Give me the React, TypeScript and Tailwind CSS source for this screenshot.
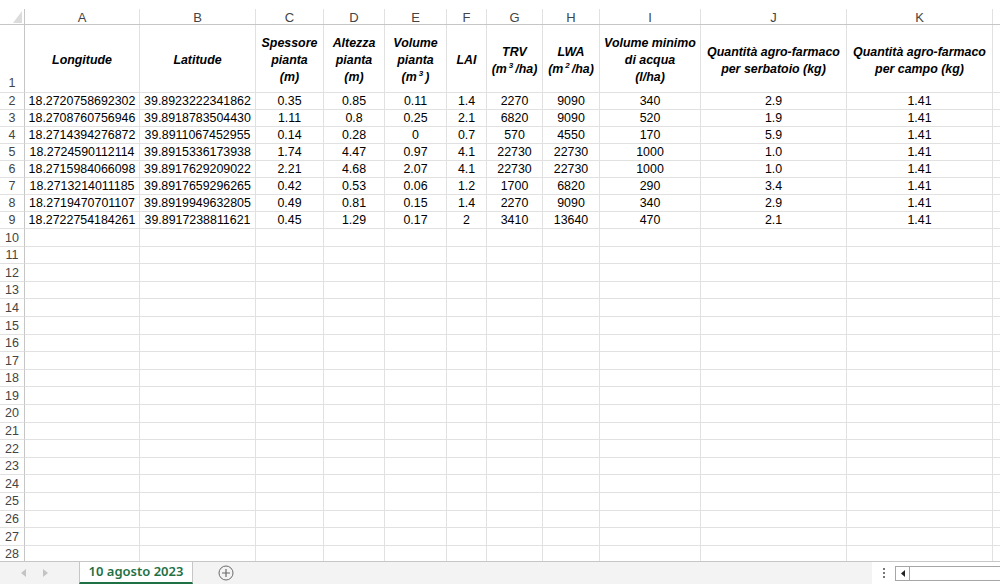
import React from 'react';

const cols = 'grid grid-cols-[25px_115px_116px_68px_61px_62px_40px_56px_57px_101px_146px_146px_1fr]';
const letters = ['A', 'B', 'C', 'D', 'E', 'F', 'G', 'H', 'I', 'J', 'K'];

const data: string[][] = [
  ['18.2720758692302', '39.8923222341862', '0.35', '0.85', '0.11', '1.4', '2270', '9090', '340', '2.9', '1.41'],
  ['18.2708760756946', '39.8918783504430', '1.11', '0.8', '0.25', '2.1', '6820', '9090', '520', '1.9', '1.41'],
  ['18.2714394276872', '39.8911067452955', '0.14', '0.28', '0', '0.7', '570', '4550', '170', '5.9', '1.41'],
  ['18.2724590112114', '39.8915336173938', '1.74', '4.47', '0.97', '4.1', '22730', '22730', '1000', '1.0', '1.41'],
  ['18.2715984066098', '39.8917629209022', '2.21', '4.68', '2.07', '4.1', '22730', '22730', '1000', '1.0', '1.41'],
  ['18.2713214011185', '39.8917659296265', '0.42', '0.53', '0.06', '1.2', '1700', '6820', '290', '3.4', '1.41'],
  ['18.2719470701107', '39.8919949632805', '0.49', '0.81', '0.15', '1.4', '2270', '9090', '340', '2.9', '1.41'],
  ['18.2722754184261', '39.8917238811621', '0.45', '1.29', '0.17', '2', '3410', '13640', '470', '2.1', '1.41'],
];

const Sup = ({ n }: { n: string }) => (
  <span className="relative -top-[5px] ml-[2px] mr-[2px] text-[8px] leading-none">{n}</span>
);

// header cells of row 1
const headers: React.ReactNode[] = [
  <>Longitude</>,
  <>Latitude</>,
  <>Spessore<br />pianta<br />(m)</>,
  <>Altezza<br />pianta<br />(m)</>,
  <>Volume<br />pianta<br />(m<Sup n="3" />)</>,
  <>LAI</>,
  <>TRV<br />(m<Sup n="3" />/ha)</>,
  <>LWA<br />(m<Sup n="2" />/ha)</>,
  <>Volume minimo<br />di acqua<br />(l/ha)</>,
  <>Quantità agro-farmaco<br />per serbatoio (kg)</>,
  <>Quantità agro-farmaco<br />per campo (kg)</>,
];

const emptyRows = Array.from({ length: 19 }, (_, i) => i + 10);

export default function App() {
  return (
    <div className="flex h-[584px] w-[1000px] flex-col overflow-hidden bg-white font-['Liberation_Sans',Arial,sans-serif] text-black">
      <div className="flex-1 overflow-hidden">
        <div className="h-[9px]" />

        {/* column letters */}
        <div className={`${cols} h-[16px] border-b border-[#c6c6c6]`}>
          <div className="relative border-r border-[#c6c6c6]">
            <svg className="absolute right-[1px] bottom-[1px]" width="10" height="12" viewBox="0 0 10 12">
              <polygon points="9,0 9,12 0,12" fill="#dcdcdc" />
            </svg>
          </div>
          {letters.map((l) => (
            <div key={l} className="flex items-center justify-center border-r border-[#e1e1e1] pt-[2px] text-[13px] leading-none text-[#444]">
              {l}
            </div>
          ))}
          <div />
        </div>

        {/* row 1 headers */}
        <div className={`${cols} h-[68px]`}>
          <div className="flex items-end justify-center border-r border-b border-[#c6c6c6] border-b-[#e1e1e1] pb-[1px] text-[12.5px] leading-[15px] text-[#444]">
            1
          </div>
          {headers.map((h, i) => (
            <div
              key={i}
              className="flex items-center justify-center whitespace-nowrap border-r border-b border-[#e1e1e1] pt-[4px] text-center text-[12.4px] font-bold italic leading-[17px]"
            >
              <div>{h}</div>
            </div>
          ))}
          <div className="border-b border-[#e1e1e1]" />
        </div>

        {/* data rows */}
        {data.map((r, i) => (
          <div key={i} className={`${cols} h-[17px]`}>
            <div className="flex items-center justify-center border-r border-b border-[#c6c6c6] border-b-[#e1e1e1] pt-[1px] text-[12.5px] leading-none text-[#444]">
              {i + 2}
            </div>
            {r.map((v, j) => (
              <div key={j} className="flex items-center justify-center border-r border-b border-[#e1e1e1] pt-[1px] text-[12.4px] leading-none">
                {v}
              </div>
            ))}
            <div className="border-b border-[#e1e1e1]" />
          </div>
        ))}

        {/* empty rows */}
        {emptyRows.map((n) => (
          <div key={n} className={`${cols} h-[17.6px]`}>
            <div className="flex items-center justify-center border-r border-b border-[#c6c6c6] border-b-[#e1e1e1] pt-[1px] text-[12.5px] leading-none text-[#444]">
              {n}
            </div>
            {letters.map((l) => (
              <div key={l} className="border-r border-b border-[#e1e1e1]" />
            ))}
            <div className="border-b border-[#e1e1e1]" />
          </div>
        ))}
      </div>

      {/* sheet tabs bar */}
      <div className="flex h-[23px] shrink-0 border-t border-[#c6c6c6]">
        <div className="flex flex-1 bg-[#f3f3f3]">
          <div className="flex w-[79px] items-center gap-[17px] pl-[21px]">
            <svg width="5" height="8" viewBox="0 0 5 8"><polygon points="5,0 5,8 0,4" fill="#c4c4c4" /></svg>
            <svg width="5" height="8" viewBox="0 0 5 8"><polygon points="0,0 0,8 5,4" fill="#c4c4c4" /></svg>
          </div>
          <div className="flex w-[114px] items-center justify-center border-x border-b-2 border-[#c6c6c6] border-b-[#1e7145] bg-white pb-[1px] font-['Noto_Sans',sans-serif] text-[13px] font-semibold text-[#1e7145]">
            10 agosto 2023
          </div>
          <div className="flex w-[66px] items-center justify-center">
            <svg width="16" height="16" viewBox="0 0 16 16">
              <circle cx="8" cy="8" r="7" fill="none" stroke="#6b6b6b" strokeWidth="1" />
              <path d="M8 4v8M4 8h8" stroke="#6b6b6b" strokeWidth="1.2" />
            </svg>
          </div>
        </div>
        <div className="flex w-[128px] items-center bg-white">
          <div className="flex w-[23px] flex-col items-center gap-[2px]">
            <span className="h-[2px] w-[2px] bg-[#777]" />
            <span className="h-[2px] w-[2px] bg-[#777]" />
            <span className="h-[2px] w-[2px] bg-[#777]" />
          </div>
          <div className="flex h-[15px] flex-1 border border-r-0 border-[#a6a6a6]">
            <div className="flex w-[14px] items-center justify-center border-r border-[#a6a6a6]">
              <svg width="4" height="7" viewBox="0 0 4 7"><polygon points="4,0 4,7 0,3.5" fill="#222" /></svg>
            </div>
          </div>
        </div>
      </div>
    </div>
  );
}
